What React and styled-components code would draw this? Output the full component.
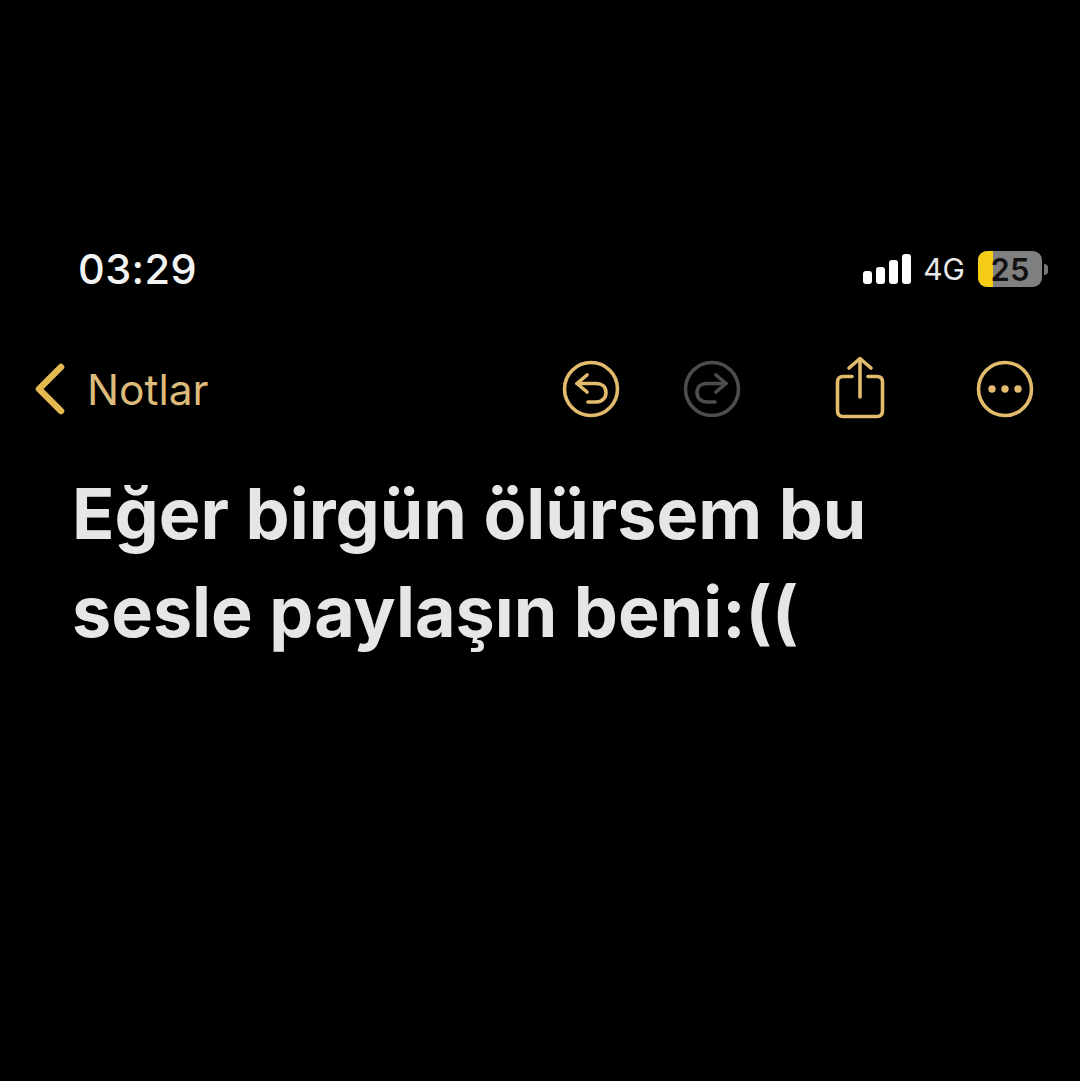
import styled, { createGlobalStyle } from "styled-components";

const GOLD = "#e2bb6c";
const GOLD_TEXT = "#dcbb7a";
const CHEVRON = "#e6b850";
const GREY = "#4d4d4d";

const GlobalStyle = createGlobalStyle`
  html, body {
    margin: 0;
    background: #000;
  }
`;

const Screen = styled.div`
  width: 1080px;
  height: 1081px;
  background: #000;
  font-family: Inter, "Liberation Sans", sans-serif;
  padding-top: 246px;
  box-sizing: border-box;
  overflow: hidden;
`;

const StatusBar = styled.div`
  height: 46px;
  padding: 0 32px 0 78px;
  display: flex;
  align-items: center;
  justify-content: space-between;
`;

const Time = styled.div`
  color: #f4f4f4;
  font-size: 41.5px;
  font-weight: 500;
  letter-spacing: 0.4px;
`;

const StatusRight = styled.div`
  display: flex;
  align-items: center;
  gap: 12px;
`;

const Signal = styled.div`
  display: flex;
  align-items: flex-end;
  gap: 4px;
  height: 30px;
`;

const SignalBar = styled.div`
  width: 9px;
  height: ${(p) => p.$h}px;
  background: #fff;
  border-radius: 3px;
`;

const Network = styled.div`
  color: #e8e8e8;
  font-size: 30px;
  font-weight: 400;
`;

const BatteryWrap = styled.div`
  display: flex;
  align-items: center;
  gap: 2px;
`;

const Battery = styled.div`
  position: relative;
  width: 64px;
  height: 36px;
  margin-left: 1px;
  border-radius: 9px;
  overflow: hidden;
  background: #808080;
  display: flex;
  align-items: center;
  justify-content: center;
`;

const BatteryFill = styled.div`
  position: absolute;
  left: 0;
  top: 0;
  bottom: 0;
  width: 15px;
  background: #f5cd16;
`;

const BatteryLevel = styled.span`
  position: relative;
  color: #111;
  font-size: 31px;
  font-weight: 600;
`;

const BatteryNub = styled.div`
  width: 4px;
  height: 11px;
  background: #777;
  border-radius: 0 4px 4px 0;
`;

const NavBar = styled.div`
  margin-top: 55px;
  height: 84px;
  padding: 0 45px 0 33px;
  display: flex;
  align-items: center;
`;

const BackLink = styled.div`
  display: flex;
  align-items: center;
  gap: 20px;
  color: ${GOLD_TEXT};
  font-size: 42.5px;
  font-weight: 400;
  flex: 1;
`;

const NavActions = styled.div`
  display: flex;
  align-items: center;
`;

const IconSlot = styled.div`
  width: ${(p) => p.$w}px;
  display: flex;
  line-height: 0;
`;

const Note = styled.h1`
  margin: 0;
  padding: 34px 60px 0 72px;
  color: #e6e6e6;
  font-size: 70px;
  font-weight: 700;
  line-height: 98px;
`;

const CircleIcon = ({ color, children }) => (
  <svg width="60" height="60" viewBox="0 0 60 60" fill="none" stroke={color} strokeWidth="3.6" strokeLinecap="round" strokeLinejoin="round">
    <circle cx="30" cy="30" r="26.5" />
    {children}
  </svg>
);

export default function App() {
  return (
    <Screen>
      <GlobalStyle />
      <StatusBar>
        <Time>03:29</Time>
        <StatusRight>
          <Signal>
            <SignalBar $h={13} />
            <SignalBar $h={17} />
            <SignalBar $h={24} />
            <SignalBar $h={30} />
          </Signal>
          <Network>4G</Network>
          <BatteryWrap>
            <Battery>
              <BatteryFill />
              <BatteryLevel>25</BatteryLevel>
            </Battery>
            <BatteryNub />
          </BatteryWrap>
        </StatusRight>
      </StatusBar>
      <NavBar>
        <BackLink>
          <svg width="34" height="54" viewBox="0 0 34 54" fill="none" stroke={CHEVRON} strokeWidth="6.5" strokeLinecap="round" strokeLinejoin="round">
            <path d="M28 5 L6 27 L28 49" />
          </svg>
          Notlar
        </BackLink>
        <NavActions>
          <IconSlot $w={121}>
            <CircleIcon color={GOLD}>
              <path d="M26 16 L16 24.5 L26 33" />
              <path d="M16 24.5 H35 C41 24.5 45 28 45 33.5 C45 39 41 43 35 43 H27" />
            </CircleIcon>
          </IconSlot>
          <IconSlot $w={151}>
            <CircleIcon color={GREY}>
              <path d="M34 16 L44 24.5 L34 33" />
              <path d="M44 24.5 H25 C19 24.5 15 28 15 33.5 C15 39 19 43 25 43 H33" />
            </CircleIcon>
          </IconSlot>
          <IconSlot $w={142}>
            <svg width="54" height="66" viewBox="0 0 54 66" fill="none" stroke={GOLD} strokeWidth="3.6" strokeLinecap="round" strokeLinejoin="round">
              <path d="M19 20.5 H10 C6.5 20.5 4.5 22.5 4.5 26 V55 C4.5 58.5 6.5 60.5 10 60.5 H44 C47.5 60.5 49.5 58.5 49.5 55 V26 C49.5 22.5 47.5 20.5 44 20.5 H35" />
              <path d="M27 41 V3" />
              <path d="M16 12 L27 2.5 L38 12" />
            </svg>
          </IconSlot>
          <IconSlot $w={60}>
            <CircleIcon color={GOLD}>
              <circle cx="17" cy="30" r="3.7" fill={GOLD} stroke="none" />
              <circle cx="30" cy="30" r="3.7" fill={GOLD} stroke="none" />
              <circle cx="43" cy="30" r="3.7" fill={GOLD} stroke="none" />
            </CircleIcon>
          </IconSlot>
        </NavActions>
      </NavBar>
      <Note>Eğer birgün ölürsem bu sesle paylaşın beni:((</Note>
    </Screen>
  );
}
